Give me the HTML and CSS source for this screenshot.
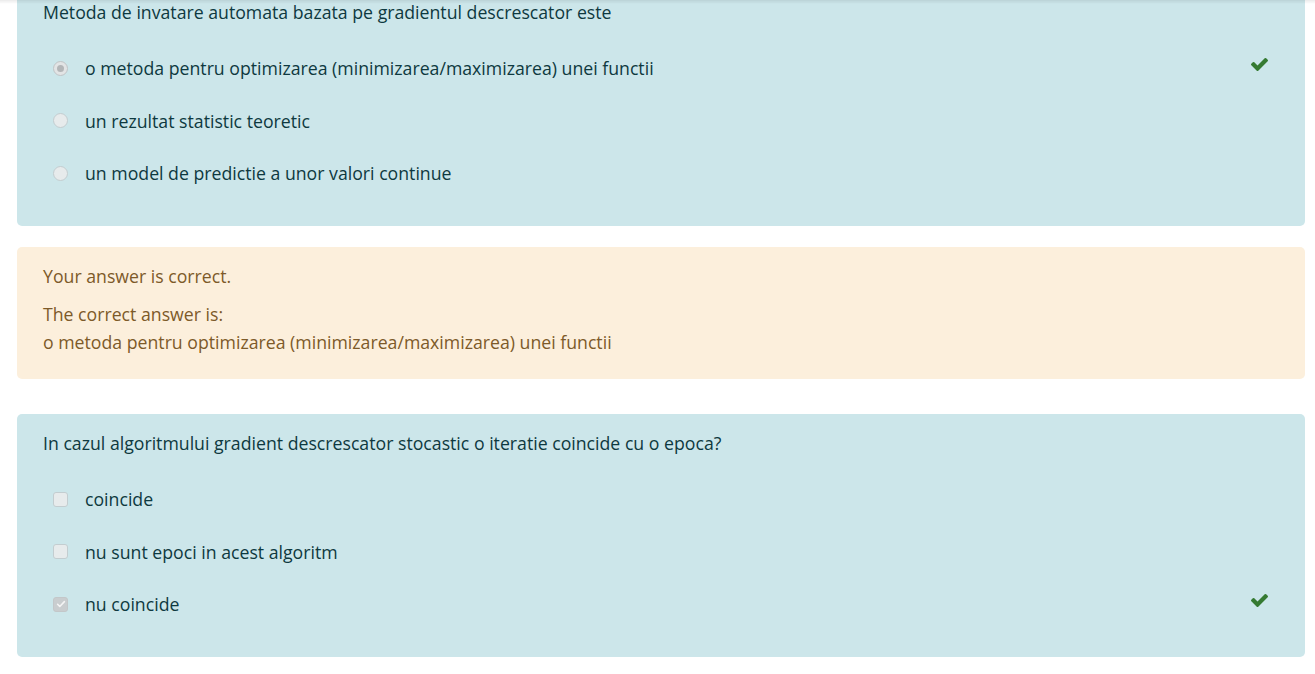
FILE: index.html
```html
<!DOCTYPE html>
<html lang="ro">
<head>
<meta charset="utf-8">
<title>Quiz review</title>
<link rel="stylesheet" href="styles.css">
</head>
<body>
<div class="topshade"></div>
<main class="page">
  <section class="que first">
    <div class="qtext">Metoda de invatare automata bazata pe gradientul descrescator este</div>
    <div class="answer">
      <div class="opt">
        <span class="radio checked"></span>
        <span class="label">o metoda pentru optimizarea (minimizarea/maximizarea) unei functii</span>
        <svg class="ok" viewBox="121 334 1550 1188" aria-hidden="true"><path d="M1671 566q0 40-28 68l-724 724-136 136q-28 28-68 28t-68-28l-136-136-362-362q-28-28-28-68t28-68l136-136q28-28 68-28t68 28l294 295 656-657q28-28 68-28t68 28l136 136q28 28 28 68z"/></svg>
      </div>
      <div class="opt">
        <span class="radio"></span>
        <span class="label">un rezultat statistic teoretic</span>
      </div>
      <div class="opt">
        <span class="radio"></span>
        <span class="label">un model de predictie a unor valori continue</span>
      </div>
    </div>
  </section>

  <section class="outcome">
    <p class="fb">Your answer is correct.</p>
    <div class="right">The correct answer is:<br>o metoda pentru optimizarea (minimizarea/maximizarea) unei functii</div>
  </section>

  <section class="que second">
    <div class="qtext">In cazul algoritmului gradient descrescator stocastic o iteratie coincide cu o epoca?</div>
    <div class="answer">
      <div class="opt">
        <span class="box"></span>
        <span class="label">coincide</span>
      </div>
      <div class="opt">
        <span class="box"></span>
        <span class="label">nu sunt epoci in acest algoritm</span>
      </div>
      <div class="opt">
        <span class="box checked"><svg viewBox="0 0 12 12" width="12" height="12" aria-hidden="true"><path d="M2.6 6.3l2.2 2.2 4.6-4.9" fill="none" stroke="#f4f4f4" stroke-width="1.6" stroke-linecap="round" stroke-linejoin="round"/></svg></span>
        <span class="label">nu coincide</span>
        <svg class="ok" viewBox="121 334 1550 1188" aria-hidden="true"><path d="M1671 566q0 40-28 68l-724 724-136 136q-28 28-68 28t-68-28l-136-136-362-362q-28-28-28-68t28-68l136-136q28-28 68-28t68 28l294 295 656-657q28-28 68-28t68 28l136 136q28 28 28 68z"/></svg>
      </div>
    </div>
  </section>
</main>
</body>
</html>
```

FILE: styles.css
```css
html, body {
  margin: 0;
  padding: 0;
  background: #ffffff;
}

body {
  font-family: "Open Sans", "Noto Sans", "Liberation Sans", sans-serif;
  font-size: 17.7px;
  line-height: 28px;
  color: #0e3940;
}

.topshade {
  position: fixed;
  top: 0;
  left: 0;
  right: 0;
  height: 4px;
  background: linear-gradient(to bottom, rgba(0, 0, 0, 0.08), rgba(0, 0, 0, 0));
  pointer-events: none;
}

.page {
  padding: 0 10px 40px 17px;
  display: flex;
  flex-direction: column;
}

.que {
  background: #cce6ea;
  border-radius: 5px;
  padding: 15px 26px 26px;
}

.que.first {
  margin-top: -17px;
  padding-bottom: 26.5px;
}

.answer {
  margin-top: 16px;
  display: flex;
  flex-direction: column;
}

.opt {
  height: 52.5px;
  display: flex;
  align-items: center;
  padding-left: 10px;
  padding-right: 11px;
}

.label {
  margin-left: 17px;
}

.ok {
  margin-left: auto;
  fill: #357a32;
  width: 17px;
  height: 13px;
  flex-shrink: 0;
  position: relative;
  top: -4px;
}

.radio {
  width: 15px;
  height: 15px;
  box-sizing: border-box;
  border-radius: 50%;
  background: #e7ebec;
  border: 1px solid #c3cdd0;
  display: flex;
  align-items: center;
  justify-content: center;
  flex-shrink: 0;
}

.radio.checked {
  background: #e2e4e5;
  border-color: #c0c4c6;
}

.radio.checked::after {
  content: "";
  width: 7px;
  height: 7px;
  border-radius: 50%;
  background: #b3b6b8;
}

.box {
  width: 15px;
  height: 15px;
  box-sizing: border-box;
  border-radius: 3px;
  background: #e7ebec;
  border: 1px solid #c3cdd0;
  display: flex;
  align-items: center;
  justify-content: center;
  flex-shrink: 0;
}

.box.checked {
  background: #c9cdcf;
  border-color: #c3c7c9;
}

.outcome {
  margin-top: 21px;
  background: #fcefdc;
  color: #7d5a29;
  border-radius: 5px;
  padding: 15px 26px 23px;
}

.fb {
  margin: 0 0 10px;
}

.que.second {
  margin-top: 35px;
}
```
